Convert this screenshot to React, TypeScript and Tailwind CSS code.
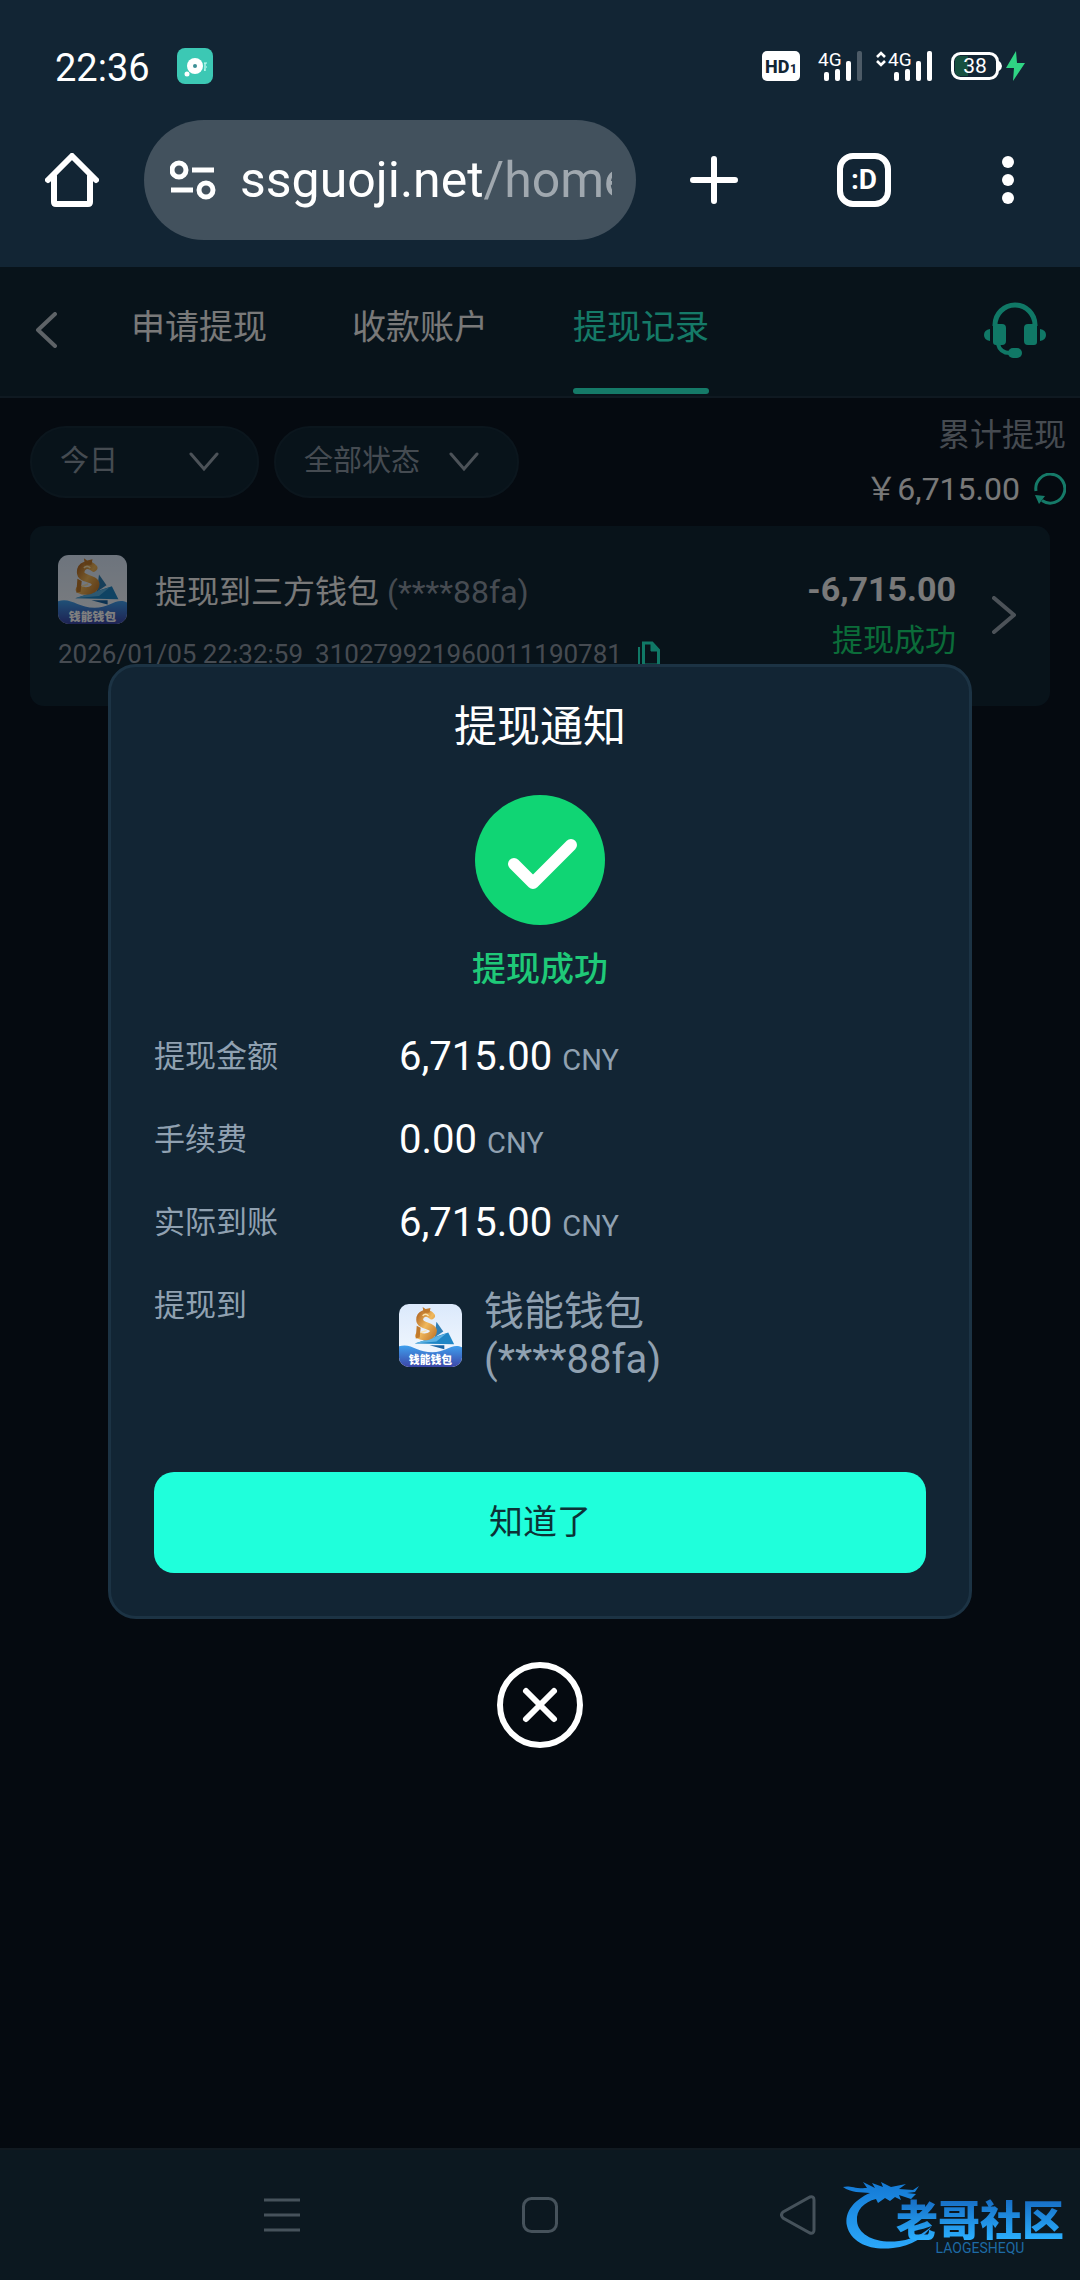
import React, { useState } from 'react';

interface DetailRow {
  label: string;
  amount: string;
}

const tabs = ['申请提现', '收款账户', '提现记录'];

const details: DetailRow[] = [
  { label: '提现金额', amount: '6,715.00' },
  { label: '手续费', amount: '0.00' },
  { label: '实际到账', amount: '6,715.00' },
];

function WalletLogo({ className }: { className: string }) {
  return (
    <svg viewBox="0 0 64 64" className={className} aria-hidden="true">
      <defs>
        <linearGradient id="wallet-sky" x1="0" y1="0" x2="0" y2="1">
          <stop offset="0" stopColor="#dbe9fb" />
          <stop offset="1" stopColor="#f6faff" />
        </linearGradient>
        <linearGradient id="wallet-sea" x1="0" y1="0" x2="0" y2="1">
          <stop offset="0" stopColor="#3fa0ee" />
          <stop offset="1" stopColor="#3c46a8" />
        </linearGradient>
        <linearGradient id="wallet-gold" x1="0" y1="0" x2="1" y2="1">
          <stop offset="0" stopColor="#b8702a" />
          <stop offset="0.5" stopColor="#f0b85c" />
          <stop offset="1" stopColor="#c98232" />
        </linearGradient>
        <clipPath id="wallet-clip">
          <rect width="64" height="64" rx="10" />
        </clipPath>
      </defs>
      <g clipPath="url(#wallet-clip)">
        <rect width="64" height="64" fill="url(#wallet-sky)" />
        <path d="M38 18l7 10-9 6z" fill="#2f7fb5" />
        <path d="M16 40l34-11 6 12z" fill="#1f86c6" />
        <path d="M16 40l32-10-10 8z" fill="#5bb2e4" />
        <path
          d="M33 12c-5-5-12-2-12 4 0 7 13 5 14 11 0 6-9 8-15 5"
          fill="none"
          stroke="url(#wallet-gold)"
          strokeWidth="7"
          strokeLinecap="round"
        />
        <path d="M24 3l3 2 5-1-1 5h-6zM18 22l4 2-1 10-4 1z" fill="#c17a2c" />
        <path d="M24 12q3-3 6 0M22 29l6-2" fill="none" stroke="#fbe3ae" strokeWidth="1.5" />
        <path d="M31 42h15v4z" fill="#1763a4" />
        <path d="M0 43c12-4 18 6 34 6 14 0 20-10 30-5v20H0z" fill="url(#wallet-sea)" />
        <text
          x="32"
          y="61"
          textAnchor="middle"
          fontSize="11"
          fontWeight="900"
          fontFamily="'Noto Sans CJK SC', sans-serif"
          fill="#ffffff"
        >
          钱能钱包
        </text>
      </g>
    </svg>
  );
}

function SignalBars({ dimLast }: { dimLast?: boolean }) {
  return (
    <svg viewBox="0 0 46 32" className="h-8 w-[46px] overflow-visible" aria-hidden="true">
      <text x="0" y="16" fontSize="19" fontFamily="Roboto, sans-serif" fill="#fff">
        4G
      </text>
      <g fill="#fff">
        <rect x="6" y="22" width="5" height="9" rx="2" />
        <rect x="17" y="19" width="5" height="12" rx="2" />
        <rect x="28" y="11" width="5" height="20" rx="2" />
        <rect x="39" y="1" width="5" height="30" rx="2" fillOpacity={dimLast ? 0.25 : 1} />
      </g>
    </svg>
  );
}

function StatusBar() {
  return (
    <div className="flex h-30 items-center justify-between pt-3 pr-[54px] pl-[55px]">
      <div className="flex items-center gap-[27px]">
        <span className="pt-1 text-[38px] leading-10">22:36</span>
        <svg viewBox="0 0 36 36" className="size-9" aria-hidden="true">
          <rect width="36" height="36" rx="8" fill="#3cc8b4" />
          <circle cx="18" cy="18" r="8" fill="#fff" />
          <circle cx="18" cy="18" r="2" fill="#3c8f96" />
          <circle cx="10" cy="26" r="2.5" fill="#fff" />
          <path d="M27 15h3M28 15v8M29 19h1M27 22h1" stroke="#c9fff5" strokeWidth="1.2" />
        </svg>
      </div>
      <div className="flex items-center">
        <svg viewBox="0 0 38 30" className="h-[30px] w-[38px]" aria-hidden="true">
          <rect width="38" height="30" rx="5" fill="#fff" />
          <text x="3" y="22" fontSize="18" fontWeight="800" fontFamily="Roboto, sans-serif" fill="#122534">
            HD
          </text>
          <text x="28" y="22" fontSize="12" fontWeight="800" fontFamily="Roboto, sans-serif" fill="#122534">
            1
          </text>
        </svg>
        <div className="ml-[18px]">
          <SignalBars dimLast />
        </div>
        <svg viewBox="0 0 10 32" className="ml-3 h-8 w-[10px]" fill="none" stroke="#fff" strokeWidth="2.6" aria-hidden="true">
          <path d="M1 7l4-4 4 4M1 11l4 4 4-4" />
        </svg>
        <div className="ml-[2px]">
          <SignalBars />
        </div>
        <svg viewBox="0 0 76 32" className="ml-4 h-8 w-[76px]" aria-hidden="true">
          <rect x="2.5" y="3.5" width="45" height="25" rx="8" fill="none" stroke="#fff" strokeWidth="3" />
          <path d="M10 6h8v20h-8q-5 0-5-5V11q0-5 5-5z" fill="#17503f" />
          <path d="M49 11q3 2 3 5t-3 5z" fill="#fff" />
          <text x="25" y="23" textAnchor="middle" fontSize="21" fontFamily="Roboto, sans-serif" fill="#fff">
            38
          </text>
          <path d="M66 1L56 18h8l-1 13 12-18h-8z" fill="#2fd584" />
        </svg>
      </div>
    </div>
  );
}

function BrowserBar() {
  return (
    <div className="flex h-30 items-center pl-[45px]">
      <button type="button" aria-label="主页">
        <svg viewBox="0 0 54 54" className="size-[54px]" fill="none" stroke="#fff" strokeWidth="6" strokeLinecap="round" strokeLinejoin="round">
          <path d="M3 27L27 3l24 24M9 23v26q0 2 2 2h32q2 0 2-2V23" />
        </svg>
      </button>
      <button
        type="button"
        className="ml-[45px] flex h-30 min-w-0 flex-1 items-center rounded-full bg-[#42515d] pr-6 pl-[26px] text-left"
      >
        <svg viewBox="0 0 46 40" className="h-10 w-[46px] shrink-0" fill="none" stroke="#fff" strokeWidth="5" aria-hidden="true">
          <circle cx="9" cy="10" r="7" />
          <path d="M22 10h22M1 30h22" />
          <circle cx="36" cy="30" r="7" />
        </svg>
        <span className="ml-6 min-w-0 flex-1 overflow-hidden text-[50px] leading-[72px] whitespace-nowrap">
          ssguoji.net<span className="text-[#a0a8af]">/home</span>
        </span>
      </button>
      <button type="button" aria-label="新标签页" className="flex w-[156px] justify-center">
        <svg viewBox="0 0 48 48" className="size-12" stroke="#fff" strokeWidth="6" strokeLinecap="round">
          <path d="M24 3v42M3 24h42" />
        </svg>
      </button>
      <button type="button" aria-label="标签页" className="flex w-36 justify-center">
        <span className="flex size-[54px] items-center justify-center rounded-2xl border-6 border-white text-[28px] font-bold">
          :D
        </span>
      </button>
      <button type="button" aria-label="更多" className="flex w-36 justify-center">
        <svg viewBox="0 0 12 48" className="h-12 w-3" fill="#fff">
          <circle cx="6" cy="6" r="6" />
          <circle cx="6" cy="24" r="6" />
          <circle cx="6" cy="42" r="6" />
        </svg>
      </button>
    </div>
  );
}

function TabHeader() {
  const [active, setActive] = useState(2);

  return (
    <header className="flex h-[131px] items-stretch border-b-2 border-[#1e3342] bg-[#102635] pr-[34px] pl-[35px]">
      <button type="button" aria-label="返回" className="pb-1">
        <svg viewBox="0 0 22 36" className="h-9 w-[22px]" fill="none" stroke="#bcc6cf" strokeWidth="4" strokeLinecap="round" strokeLinejoin="round">
          <path d="M20 2L3 18l17 16" />
        </svg>
      </button>
      <nav className="ml-[74px] flex flex-1 gap-[85px]">
        {tabs.map((tab, index) => (
          <button
            key={tab}
            type="button"
            onClick={() => setActive(index)}
            className={
              index === active
                ? 'flex flex-col justify-between text-[34px] text-[#2bf5d0]'
                : 'flex flex-col justify-between text-[34px] text-[#f2f2f2]'
            }
          >
            <span className="leading-[121px]">{tab}</span>
            {index === active ? <span className="mb-[2px] h-[6px] w-full rounded-full bg-[#2bf5d0]" /> : null}
          </button>
        ))}
      </nav>
      <button type="button" aria-label="客服" className="pb-1">
        <svg viewBox="0 0 62 56" className="h-14 w-[62px]" fill="#20f0cc">
          <path d="M11 24v-1a20 20 0 0140 0v1" fill="none" stroke="#20f0cc" strokeWidth="5" />
          <path d="M12 22h6q4 0 4 4v13q0 4-4 4h-6q-3 0-3-3V24zM50 22h-6q-4 0-4 4v13q0 4 4 4h6q3 0 3-3V24z" />
          <path d="M6 27v12q-6-1-6-6t6-6zM56 27v12q6-1 6-6t-6-6z" />
          <path d="M14 42q2 9 12 9" fill="none" stroke="#20f0cc" strokeWidth="4" />
          <rect x="24" y="46" width="14" height="10" rx="5" />
        </svg>
      </button>
    </header>
  );
}

function FilterChevron() {
  return (
    <svg viewBox="0 0 30 20" className="h-5 w-[30px] shrink-0" fill="none" stroke="#98a5b0" strokeWidth="3" strokeLinecap="round" aria-hidden="true">
      <path d="M2 2l13 15L28 2" />
    </svg>
  );
}

function Filters() {
  return (
    <section className="flex h-32 items-center justify-between pr-[14px] pl-[30px]">
      <div className="flex gap-[15px] text-[29px] text-[#8a97a3]">
        <label className="flex h-[72px] w-[229px] items-center rounded-full border-2 border-[#172c3b] bg-[#102635] pr-[38px] pl-7">
          <select aria-label="日期" className="min-w-0 flex-1 appearance-none bg-transparent">
            <option>今日</option>
          </select>
          <FilterChevron />
        </label>
        <label className="flex h-[72px] w-[245px] items-center rounded-full border-2 border-[#172c3b] bg-[#102635] pr-[38px] pl-7">
          <select aria-label="状态" className="min-w-0 flex-1 appearance-none bg-transparent">
            <option>全部状态</option>
          </select>
          <FilterChevron />
        </label>
      </div>
      <div className="text-right text-[32px] leading-[54px]">
        <p className="text-[#8d97a3]">累计提现</p>
        <p className="flex items-center justify-end gap-[14px] text-[#f2f2f2]">
          <span>￥6,715.00</span>
          <button type="button" aria-label="刷新">
            <svg viewBox="0 0 32 32" className="size-8" fill="none" stroke="#2bf5d0" strokeWidth="3">
              <path d="M2 18A14.500 14.500 0 1 1 8 27.500" />
              <path d="M1 22l10 1-6 8z" fill="#2bf5d0" stroke="none" />
            </svg>
          </button>
        </p>
      </div>
    </section>
  );
}

function RecordCard() {
  return (
    <article className="mr-[30px] ml-[30px] flex items-center rounded-[14px] bg-[#102635] pt-[29px] pr-[34px] pb-8 pl-7">
      <div className="flex-1">
        <div className="flex items-end">
          <WalletLogo className="size-[69px]" />
          <h3 className="ml-7 text-[32px] leading-[64px] text-[#f2f2f2]">
            提现到三方钱包 <span className="text-[#8d97a3]">(****88fa)</span>
          </h3>
        </div>
        <div className="mt-[10px] flex items-center text-[26px] leading-10 text-[#8d97a3]">
          <time>2026/01/05 22:32:59</time>
          <span className="ml-3">310279921960011190781</span>
          <button type="button" aria-label="复制" className="ml-4">
            <svg viewBox="0 0 22 26" className="h-[26px] w-[22px]" fill="none" stroke="#20f0cc" strokeWidth="3">
              <path d="M5.500 2H14l6.500 7v15h-15z" />
              <path d="M13 2v8h8z" fill="#20f0cc" strokeWidth="1" />
              <path d="M1 6v20" strokeWidth="2" />
            </svg>
          </button>
        </div>
      </div>
      <div className="text-right leading-[52px]">
        <p className="text-[34px] font-bold text-[#f2f2f2]">-6,715.00</p>
        <p className="text-[31px] text-[#16d973]">提现成功</p>
      </div>
      <button type="button" aria-label="查看详情" className="ml-9">
        <svg viewBox="0 0 24 38" className="h-[38px] w-6" fill="none" stroke="#98a5b0" strokeWidth="4" strokeLinecap="round" strokeLinejoin="round">
          <path d="M2 2l20 17L2 36" />
        </svg>
      </button>
    </article>
  );
}

function WithdrawDialog() {
  return (
    <div className="absolute inset-0 flex flex-col items-center justify-center bg-black/50 pb-1">
      <div
        role="dialog"
        aria-label="提现通知"
        className="flex w-4/5 flex-col items-center rounded-[28px] border-3 border-[#1c3344] bg-[#122534] px-[43px] pt-7 pb-[43px]"
      >
        <h2 className="text-[43px] leading-[64px]">提现通知</h2>
        <svg viewBox="0 0 130 130" className="mt-9 size-[130px]" aria-hidden="true">
          <circle cx="65" cy="65" r="65" fill="#10d574" />
          <path
            d="M39 69l19 19 38-38"
            fill="none"
            stroke="#fff"
            strokeWidth="12"
            strokeLinecap="round"
            strokeLinejoin="round"
          />
        </svg>
        <p className="mt-5 text-[34px] leading-[48px] font-medium text-[#1fc978]">提现成功</p>
        <dl className="mt-10 grid w-full grid-cols-[245px_1fr] gap-y-9 text-[31px] leading-[47px] text-[#90a1b1]">
          {details.map((row) => (
            <React.Fragment key={row.label}>
              <dt>{row.label}</dt>
              <dd className="flex h-[47px] items-baseline gap-[10px] text-[29px]">
                <span className="text-[40px] text-white">{row.amount}</span>
                <span>CNY</span>
              </dd>
            </React.Fragment>
          ))}
          <dt>提现到</dt>
          <dd className="flex items-center pt-[6px] text-[40px] leading-12">
            <WalletLogo className="size-[63px]" />
            <span className="ml-[22px]">
              钱能钱包
              <br />
              (****88fa)
            </span>
          </dd>
        </dl>
        <button
          type="button"
          className="mt-22 h-[101px] w-full rounded-[20px] bg-[#1fffdb] text-[34px] text-[#0c3236]"
        >
          知道了
        </button>
      </div>
      <button type="button" aria-label="关闭" className="mt-[43px]">
        <svg viewBox="0 0 86 86" className="size-[86px]" fill="none" stroke="#fff" strokeWidth="6" strokeLinecap="round">
          <circle cx="43" cy="43" r="40" />
          <path d="M29 29l28 28M57 29L29 57" />
        </svg>
      </button>
    </div>
  );
}

function CommunityLogo() {
  return (
    <div className="absolute right-4 bottom-6 flex items-end">
      <svg viewBox="0 0 96 76" className="-mr-10 h-[76px] w-24" aria-hidden="true">
        <defs>
          <linearGradient id="dragon" x1="0" y1="0" x2="0" y2="1">
            <stop offset="0" stopColor="#1479d4" />
            <stop offset="1" stopColor="#2ba8fb" />
          </linearGradient>
        </defs>
        <path
          d="M30 13C14 20 4 32 7 46c4 17 24 25 46 22 19-2 32-11 40-24-3 5-16 15-34 17-23 3-41-6-42-20C16 30 24 22 36 19l2 4 7-5 5 3 5-4 6 3-2-5 12 4 5-5-9-1 8-1 4-6-6 4-14-1 7-5-15 3-10-5 2 5-11-4 3 5-12-6 4 6C14 9 10 5 3 7c8 6 18 5 27 6z"
          fill="url(#dragon)"
        />
      </svg>
      <div className="flex flex-col items-center">
        <span className="bg-linear-to-b from-[#1668c0] to-[#2bb0ff] bg-clip-text font-['Noto_Sans_CJK_SC',sans-serif] text-[42px] leading-[44px] font-black text-transparent">
          老哥社区
        </span>
        <span className="text-[14px] leading-[16px] text-[#1d6aa5]">LAOGESHEQU</span>
      </div>
    </div>
  );
}

function SystemNav() {
  return (
    <footer className="relative flex h-[132px] items-center justify-center gap-[222px] border-t-2 border-[#111a21] bg-[#0c1820]">
      <button type="button" aria-label="最近任务">
        <svg viewBox="0 0 36 36" className="size-9" stroke="#46525b" strokeWidth="3">
          <path d="M0 3h36M0 18h36M0 33h36" />
        </svg>
      </button>
      <button type="button" aria-label="主屏幕">
        <svg viewBox="0 0 36 36" className="size-9" fill="none" stroke="#46525b" strokeWidth="3">
          <rect x="1.500" y="1.500" width="33" height="33" rx="8" />
        </svg>
      </button>
      <button type="button" aria-label="返回上一页">
        <svg viewBox="0 0 36 40" className="h-10 w-9" fill="none" stroke="#46525b" strokeWidth="3">
          <path d="M3 17L30 2q4-1 4 3v30q0 4-4 3L3 23q-3-3 0-6z" />
        </svg>
      </button>
      <CommunityLogo />
    </footer>
  );
}

export default function App() {
  return (
    <div className="flex min-h-screen flex-col bg-[#122534] font-[Roboto,'Noto_Sans_CJK_SC',sans-serif] text-white">
      <div className="pb-[27px]">
        <StatusBar />
        <BrowserBar />
      </div>
      <main className="relative flex-1 bg-[#0a1420]">
        <TabHeader />
        <Filters />
        <RecordCard />
        <WithdrawDialog />
      </main>
      <SystemNav />
    </div>
  );
}
